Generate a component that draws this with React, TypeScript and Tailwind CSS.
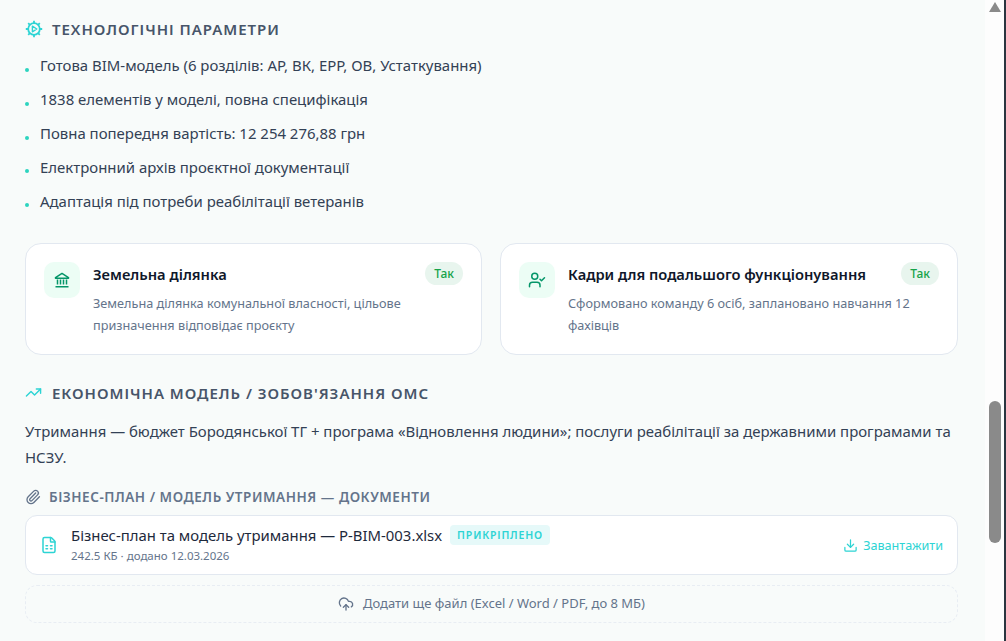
import { Paperclip, TrendingUp, UserCheck, FileSpreadsheet, Download, CloudUpload } from 'lucide-react';

const PARAMS = [
  'Готова BIM-модель (6 розділів: АР, ВК, ЕРР, ОВ, Устаткування)',
  '1838 елементів у моделі, повна специфікація',
  'Повна попередня вартість: 12 254 276,88 грн',
  'Електронний архів проєктної документації',
  'Адаптація під потреби реабілітації ветеранів',
];

function GearPlay() {
  return (
    <svg width="18" height="18" viewBox="0 0 18 18" fill="none" stroke="#2dd4d4" strokeWidth="1.8" strokeLinejoin="round">
      <circle cx="9" cy="9" r="5.8" />
      <path d="M9 .8v2.4M9 14.8v2.4M.8 9h2.4M14.8 9h2.4M3.2 3.2l1.7 1.7M13.1 13.1l1.7 1.7M3.2 14.8l1.7-1.7M13.1 4.9l1.7-1.7" />
      <path d="M7.4 6.2v5.6L11.8 9z" strokeWidth="1.4" />
    </svg>
  );
}

function BankIcon() {
  return (
    <svg width="18" height="18" viewBox="0 0 18 18" fill="none" stroke="currentColor" strokeWidth="1.5">
      <path d="M2.5 6.6 9 2.4l6.5 4.2v.6h-13z" strokeLinejoin="round" />
      <path d="M4.5 8.6v5M7.5 8.6v5M10.5 8.6v5M13.5 8.6v5M2.5 15.8h13" />
    </svg>
  );
}

function InfoCard({ icon, title, text }: { icon: React.ReactNode; title: string; text: string }) {
  return (
    <div className="flex gap-[13px] bg-white border border-[#e2e8f0] rounded-[16px] pt-[18px] pl-[18px] pr-[18px] h-[112px]">
      <div className="w-9 h-9 shrink-0 rounded-[10px] bg-[#ecfdf5] flex items-center justify-center text-[#059669]">{icon}</div>
      <div className="flex-1 min-w-0">
        <div className="flex justify-between items-start">
          <div className="text-[14.7px] leading-[24px] font-semibold text-[#0f172a]">{title}</div>
          <span className="text-[12px] leading-[24px] h-[23px] px-[9px] font-medium text-[#16a34a] bg-[#e8f5ee] rounded-full">Так</span>
        </div>
        <p className="text-[12.7px] leading-[22px] text-[#64748b] mt-[6px]">{text}</p>
      </div>
    </div>
  );
}

export default function App() {
  return (
    <div className="h-[641px] w-[1006px] flex overflow-hidden bg-[#f8fbfa] font-['Noto_Sans',sans-serif]">
      <main className="w-[985px] shrink-0 pl-[25px] pr-[27px] pt-[18px]">
        <h3 className="flex items-center gap-[9px] h-[22px] text-[15px] font-semibold tracking-[0.065em] text-[#475569] uppercase">
          <GearPlay />
          Технологічні параметри
        </h3>

        <ul className="mt-[8.3px] h-[169px]">
          {PARAMS.map((item) => (
            <li key={item} className="flex h-[33.9px] items-center text-[14.95px] text-[#334155]">
              <span className="w-[4px] h-[4px] rounded-full bg-[#2dd4bf] mt-[9px] mr-[11px] shrink-0" />
              {item}
            </li>
          ))}
        </ul>

        <div className="grid grid-cols-[457px_458px] gap-[18px] mt-[25.7px]">
          <InfoCard
            icon={<BankIcon />}
            title="Земельна ділянка"
            text="Земельна ділянка комунальної власності, цільове призначення відповідає проєкту"
          />
          <InfoCard
            icon={<UserCheck size={18} strokeWidth={2} />}
            title="Кадри для подальшого функціонування"
            text="Сформовано команду 6 осіб, заплановано навчання 12 фахівців"
          />
        </div>

        <h3 className="flex items-center gap-[10px] mt-[27px] h-[22px] text-[15px] font-semibold tracking-[0.065em] text-[#475569] uppercase">
          <TrendingUp size={17} className="text-[#2dd4d4]" />
          Економічна модель / зобов'язання ОМС
        </h3>

        <p className="mt-[14px] text-[14.95px] leading-[26px] text-[#334155]">
          Утримання — бюджет Бородянської ТГ + програма «Відновлення людини»; послуги реабілітації за державними програмами та НСЗУ.
        </p>

        <h4 className="flex items-center gap-[8px] mt-[17px] h-[20px] text-[13.5px] font-semibold tracking-[0.04em] text-[#64748b] uppercase">
          <Paperclip size={16} />
          Бізнес-план / модель утримання — документи
        </h4>

        <div className="flex items-center mt-[8px] h-[60px] bg-white border border-[#e2e8f0] rounded-[12px] pl-[14px] pr-[14px]">
          <FileSpreadsheet size={18} className="text-[#2dd4d4] mr-[13px]" />
          <div className="flex-1 min-w-0">
            <div className="flex items-center gap-[8px]">
              <span className="text-[14.9px] leading-[20px] text-[#1e293b]">Бізнес-план та модель утримання — P-BIM-003.xlsx</span>
              <span className="text-[10.5px] leading-[20px] px-[7px] font-semibold tracking-[0.08em] text-[#2dd4d4] bg-[#e6f9f9] rounded-[4px]">ПРИКРІПЛЕНО</span>
            </div>
            <div className="text-[11.5px] leading-[18px] mt-[2px] text-[#64748b]">242.5 КБ · додано 12.03.2026</div>
          </div>
          <a className="flex items-center gap-[5px] mt-[2px] text-[12.6px] text-[#2dd4d4]">
            <Download size={15} />
            Завантажити
          </a>
        </div>

        <div className="flex items-center justify-center gap-[9px] mt-[10px] h-[38px] border border-dashed border-[#e8edf3] rounded-[12px] text-[13px] text-[#64748b]">
          <CloudUpload size={16} />
          Додати ще файл (Excel / Word / PDF, до 8 МБ)
        </div>
      </main>

      <aside className="w-[19px] shrink-0 bg-[#fdfdfd] flex flex-col items-center relative">
        <div className="mt-[2px] w-0 h-0 border-l-[6px] border-r-[6px] border-b-[10px] border-l-transparent border-r-transparent border-b-[#8a8a8a]" />
        <div className="absolute left-[4px] top-[401px] w-[12px] h-[142px] rounded-full bg-[#8a8a8a]" />
      </aside>
      <div className="w-[2px] shrink-0 bg-[#2a3540]" />
    </div>
  );
}
